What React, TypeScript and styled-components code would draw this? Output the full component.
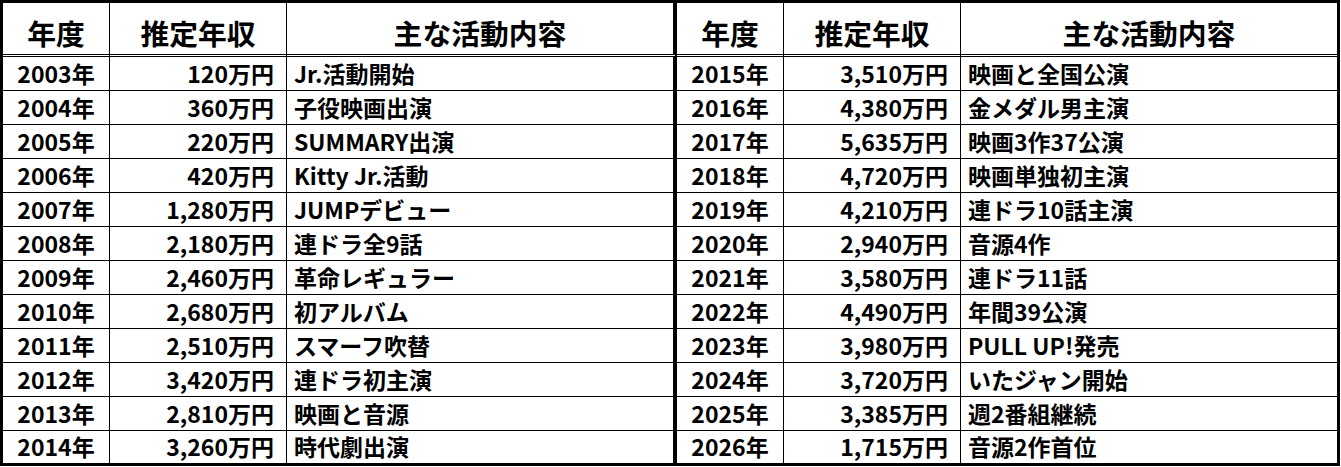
import styled, { createGlobalStyle } from 'styled-components';

const GlobalStyle = createGlobalStyle`
  html, body {
    margin: 0;
    padding: 0;
    background: #ffffff;
  }
  body {
    font-family: "Noto Sans CJK JP", "Noto Sans", sans-serif;
    color: #000000;
  }
`;

type Row = { year: string; income: string; activity: string };

const left: Row[] = [
  { year: '2003年', income: '120万円', activity: 'Jr.活動開始' },
  { year: '2004年', income: '360万円', activity: '子役映画出演' },
  { year: '2005年', income: '220万円', activity: 'SUMMARY出演' },
  { year: '2006年', income: '420万円', activity: 'Kitty Jr.活動' },
  { year: '2007年', income: '1,280万円', activity: 'JUMPデビュー' },
  { year: '2008年', income: '2,180万円', activity: '連ドラ全9話' },
  { year: '2009年', income: '2,460万円', activity: '革命レギュラー' },
  { year: '2010年', income: '2,680万円', activity: '初アルバム' },
  { year: '2011年', income: '2,510万円', activity: 'スマーフ吹替' },
  { year: '2012年', income: '3,420万円', activity: '連ドラ初主演' },
  { year: '2013年', income: '2,810万円', activity: '映画と音源' },
  { year: '2014年', income: '3,260万円', activity: '時代劇出演' },
];

const right: Row[] = [
  { year: '2015年', income: '3,510万円', activity: '映画と全国公演' },
  { year: '2016年', income: '4,380万円', activity: '金メダル男主演' },
  { year: '2017年', income: '5,635万円', activity: '映画3作37公演' },
  { year: '2018年', income: '4,720万円', activity: '映画単独初主演' },
  { year: '2019年', income: '4,210万円', activity: '連ドラ10話主演' },
  { year: '2020年', income: '2,940万円', activity: '音源4作' },
  { year: '2021年', income: '3,580万円', activity: '連ドラ11話' },
  { year: '2022年', income: '4,490万円', activity: '年間39公演' },
  { year: '2023年', income: '3,980万円', activity: 'PULL UP!発売' },
  { year: '2024年', income: '3,720万円', activity: 'いたジャン開始' },
  { year: '2025年', income: '3,385万円', activity: '週2番組継続' },
  { year: '2026年', income: '1,715万円', activity: '音源2作首位' },
];

const Table = styled.div`
  box-sizing: border-box;
  width: 1340px;
  border: 3px solid #000;
  display: grid;
  grid-template-columns: 107px 177px 390px 107px 177px 376px;
  grid-template-rows: 54px repeat(11, 34px) 32px;
  font-weight: 700;
`;

const Cell = styled.div<{ $split?: boolean; $end?: boolean; $last?: boolean }>`
  box-sizing: border-box;
  display: flex;
  align-items: flex-end;
  border-right: ${(p) => (p.$split ? '4px solid #000' : p.$end ? 'none' : '1px solid #000')};
  border-bottom: ${(p) => (p.$last ? 'none' : '1px solid #000')};
  white-space: nowrap;
`;

const HeadCell = styled(Cell)`
  justify-content: center;
  font-size: 28.8px;
  line-height: 1;
  padding-bottom: 6px;
  border-bottom: 3px double #000;
`;

const YearCell = styled(Cell)`
  justify-content: center;
  font-size: 23px;
  line-height: 1;
  padding-bottom: 5px;
`;

const IncomeCell = styled(Cell)`
  justify-content: flex-end;
  font-size: 23px;
  line-height: 1;
  padding: 0 12px 5px 0;
`;

const ActivityCell = styled(Cell)`
  justify-content: flex-start;
  font-size: 23px;
  line-height: 1;
  padding: 0 0 5px 7px;
`;

export default function App() {
  return (
    <>
      <GlobalStyle />
      <Table>
        <HeadCell>年度</HeadCell>
        <HeadCell>推定年収</HeadCell>
        <HeadCell $split>主な活動内容</HeadCell>
        <HeadCell>年度</HeadCell>
        <HeadCell>推定年収</HeadCell>
        <HeadCell $end>主な活動内容</HeadCell>
        {left.map((row, i) => {
          const r = right[i];
          const last = i === left.length - 1;
          return [
            <YearCell key={`ly${i}`} $last={last}>{row.year}</YearCell>,
            <IncomeCell key={`li${i}`} $last={last}>{row.income}</IncomeCell>,
            <ActivityCell key={`la${i}`} $last={last} $split>{row.activity}</ActivityCell>,
            <YearCell key={`ry${i}`} $last={last}>{r.year}</YearCell>,
            <IncomeCell key={`ri${i}`} $last={last}>{r.income}</IncomeCell>,
            <ActivityCell key={`ra${i}`} $last={last} $end>{r.activity}</ActivityCell>,
          ];
        })}
      </Table>
    </>
  );
}
